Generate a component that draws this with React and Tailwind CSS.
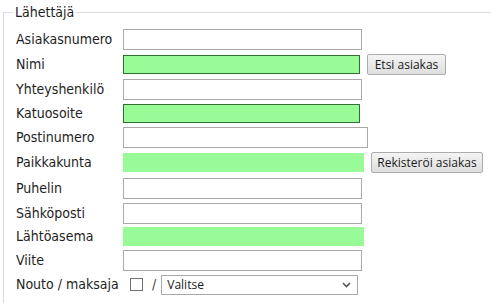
const rows = [
    { label: "Asiakasnumero", h: "h-[26px]", input: "plain", w: "w-[239px]" },
    { label: "Nimi", h: "h-[25px]", input: "greenBorder", w: "w-[237px]", button: "Etsi asiakas", bw: "w-[79px]" },
    { label: "Yhteyshenkilö", h: "h-[25px]", input: "plain", w: "w-[239px]" },
    { label: "Katuosoite", h: "h-[23px]", input: "greenBorder", w: "w-[237px]" },
    { label: "Postinumero", h: "h-[24px]", input: "plain", w: "w-[245px]" },
    { label: "Paikkakunta", h: "h-[27px]", input: "green", w: "w-[241px]", button: "Rekisteröi asiakas", bw: "w-[112px]" },
    { label: "Puhelin", h: "h-[25px]", input: "plain", w: "w-[239px]" },
    { label: "Sähköposti", h: "h-[24px]", input: "plain", w: "w-[239px]" },
    { label: "Lähtöasema", h: "h-[23px]", input: "green", w: "w-[241px]" },
    { label: "Viite", h: "h-[24px]", input: "plain", w: "w-[239px]" },
];

const inputStyles = {
    plain: "h-[21px] bg-white border border-[#a9a9a9]",
    greenBorder: "h-[19px] bg-[#98fb98] border border-[#2f6f2f]",
    green: "h-[19px] bg-[#98fb98]",
};

const Button = ({ children, w }) => (
    <div
        className={`${w} h-[21px] ml-[7px] flex items-center justify-center rounded-[2px] border border-[#acacac] bg-gradient-to-b from-[#f4f4f4] to-[#dedede] text-[12px] text-[#1a1a1a] font-['Open_Sans',sans-serif]`}
    >
        {children}
    </div>
);

export default function App() {
    return (
        <div className="w-[491px] h-[303px] overflow-hidden bg-white font-['DejaVu_Sans_Condensed','DejaVu_Sans',sans-serif] text-[14px] text-[#1e1e1e]">

            <fieldset className="mt-[4px] ml-[3px] w-[520px] h-[320px] border border-[#dcdcdc] pl-[9px] pt-[6px]">

                {/* LEGEND */}
                <legend className="px-[2px] text-[14px] leading-[16px]">
                    Lähettäjä
                </legend>

                <div className="pl-[3px]">

                    {rows.map((row) => (
                        <div key={row.label} className={`${row.h} flex items-center`}>

                            <div className="w-[107px] shrink-0">
                                {row.label}
                            </div>

                            <div className={`${row.w} ${inputStyles[row.input]}`}></div>

                            {row.button && (
                                <Button w={row.bw}>
                                    {row.button}
                                </Button>
                            )}
                        </div>
                    ))}

                    {/* NOUTO / MAKSAJA */}
                    <div className="h-[25px] flex items-center">

                        <div className="w-[114px] shrink-0">
                            Nouto / maksaja
                        </div>

                        <div className="w-[13px] h-[13px] border border-[#707070] bg-white"></div>

                        <div className="ml-[9px] text-[#444]">/</div>

                        <div className="ml-[5px] w-[197px] h-[20px] flex items-center justify-between border border-[#a9a9a9] bg-white pl-[5px] pr-[6px] text-[12px] text-[#1a1a1a] font-['Open_Sans',sans-serif]">
                            <span>Valitse</span>

                            <svg width="9" height="6" viewBox="0 0 9 6">
                                <polyline
                                    points="1,1 4.5,4.5 8,1"
                                    fill="none"
                                    stroke="#555"
                                    strokeWidth="1.6"
                                />
                            </svg>
                        </div>
                    </div>
                </div>
            </fieldset>
        </div>
    );
}
